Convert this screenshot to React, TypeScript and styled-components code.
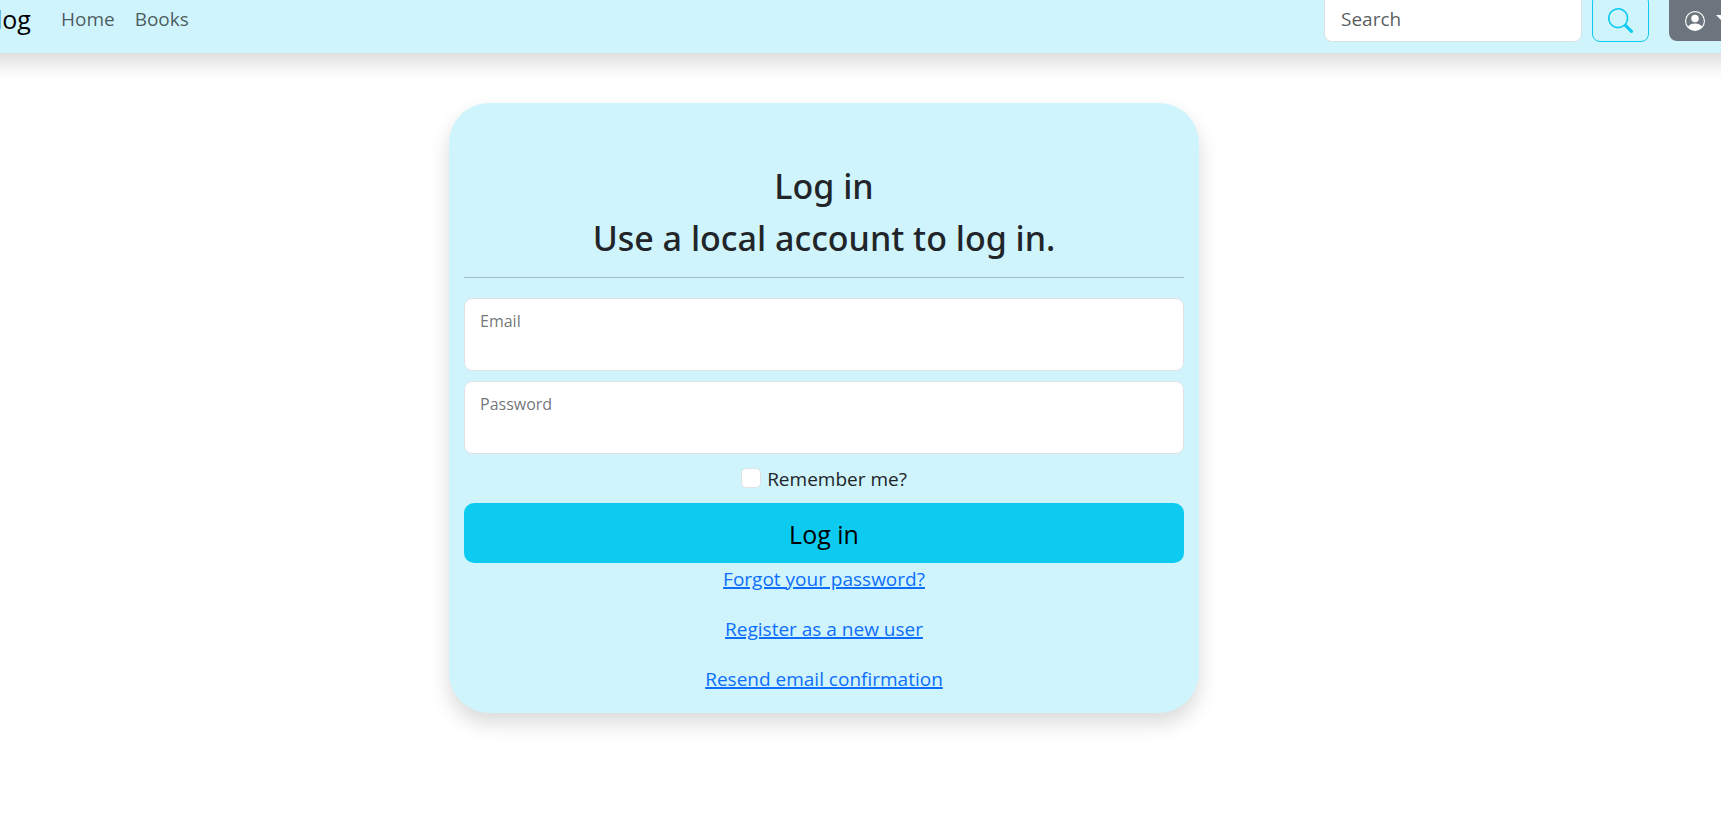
import React from "react";
import styled, { createGlobalStyle } from "styled-components";
import { BsPersonCircle, BsSearch } from "react-icons/bs";

const GlobalStyle = createGlobalStyle`
  *, *::before, *::after { box-sizing: border-box; }
  body {
    margin: 0;
    background: #fff;
    color: #212529;
    font: 400 19px/30px "Segoe UI", "Open Sans", "Noto Sans", sans-serif;
  }
  button, input { font: inherit; }
`;

const Page = styled.div`
  overflow: hidden;
`;

const Header = styled.header`
  margin: 0 -24px;
  padding-bottom: 11px;
  background: #cff4fc;
  box-shadow: 0 10px 20px rgba(0, 0, 0, 0.15);
`;

const Bar = styled.nav`
  display: flex;
  align-items: center;
  margin-top: -6px;
  padding-left: 20px;
`;

const Brand = styled.a`
  margin-right: 30px;
  padding-top: 2px;
  color: #000;
  font-size: 25px;
  line-height: 36px;
  text-decoration: none;
`;

const NavLinks = styled.div`
  display: flex;
  flex: 1;
  gap: 20px;
  padding-top: 2px;
`;

const NavLink = styled.a`
  color: rgba(0, 0, 0, 0.65);
  text-decoration: none;
`;

const SearchForm = styled.form`
  display: flex;
  gap: 10px;
  margin-right: 20px;
`;

const SearchInput = styled.input`
  width: 258px;
  height: 48px;
  padding: 2px 16px 0;
  border: 1px solid #dee2e6;
  border-radius: 8px;
  background: #fff;
  color: #212529;
  &::placeholder {
    color: rgba(33, 37, 41, 0.75);
    opacity: 1;
  }
`;

const SearchButton = styled.button`
  display: flex;
  align-items: center;
  justify-content: center;
  width: 57px;
  height: 48px;
  padding: 4px 0 0;
  border: 1px solid #0dcaf0;
  border-radius: 8px;
  background: transparent;
  color: #0dcaf0;
`;

const UserButton = styled.button`
  display: flex;
  align-items: center;
  align-self: flex-start;
  gap: 11px;
  width: 76px;
  height: 47px;
  padding: 7px 16px 0;
  border: 0;
  border-radius: 8px;
  background: #6c757d;
  color: #fff;
`;

const Caret = styled.span`
  flex: none;
  margin-bottom: 6px;
  border: 6px solid transparent;
  border-top-color: currentColor;
  border-bottom: 0;
`;

const Main = styled.main`
  display: flex;
  justify-content: center;
  padding: 50px 73px 50px 0;
`;

const Card = styled.section`
  width: 750px;
  max-width: 100%;
  padding: 62px 15px 19px;
  border-radius: 40px;
  background: #cff4fc;
  box-shadow: 0 10px 20px rgba(0, 0, 0, 0.15);
  text-align: center;
`;

const Title = styled.h1`
  margin: 0 0 10px;
  font-family: "Segoe UI", "Noto Sans", sans-serif;
  font-size: 34px;
  font-weight: 500;
  line-height: 42px;
`;

const Divider = styled.hr`
  margin: 18px 0 20px;
  border: 0;
  border-top: 1px solid #212529;
  opacity: 0.25;
`;

const Form = styled.form`
  display: flex;
  flex-direction: column;
`;

const Field = styled.div`
  position: relative;
  margin-bottom: 10px;
`;

const FieldInput = styled.input`
  display: block;
  width: 100%;
  height: 73px;
  padding: 32px 15px 12px;
  border: 1px solid #dee2e6;
  border-radius: 8px;
  background: #fff;
  color: #212529;
`;

const FieldLabel = styled.label`
  position: absolute;
  top: 10px;
  left: 16px;
  color: rgba(33, 37, 41, 0.65);
  font-size: 16px;
  line-height: 26px;
`;

const Remember = styled.label`
  display: flex;
  align-items: center;
  align-self: center;
  gap: 6px;
  margin-bottom: 9px;
`;

const Checkbox = styled.input`
  appearance: none;
  width: 20px;
  height: 20px;
  margin: 0 0 2px;
  border: 1px solid #dee2e6;
  border-radius: 5px;
  background: #fff;
  &:checked { background: #0d6efd; }
`;

const Submit = styled.button`
  height: 60px;
  padding: 2px 0 0;
  border: 0;
  border-radius: 10px;
  background: #0dcaf0;
  color: #000;
  font-size: 25px;
`;

const Links = styled.div`
  display: flex;
  flex-direction: column;
  align-items: center;
  gap: 20px;
  padding-top: 1px;
`;

const TextLink = styled.a`
  color: #0d6efd;
  text-decoration: underline 2px;
`;

export default function App() {
  return (
    <Page>
      <GlobalStyle />
      <Header>
        <Bar>
          <Brand href="#">log</Brand>
          <NavLinks>
            <NavLink href="#">Home</NavLink>
            <NavLink href="#">Books</NavLink>
          </NavLinks>
          <SearchForm>
            <SearchInput type="search" placeholder="Search" aria-label="Search" />
            <SearchButton type="button" aria-label="Submit search">
              <BsSearch size={25} />
            </SearchButton>
          </SearchForm>
          <UserButton type="button" aria-label="Account menu">
            <BsPersonCircle size={20} />
            <Caret />
          </UserButton>
        </Bar>
      </Header>
      <Main>
        <Card>
          <Title>Log in</Title>
          <Title as="h2">Use a local account to log in.</Title>
          <Divider />
          <Form>
            <Field>
              <FieldInput id="email" type="email" />
              <FieldLabel htmlFor="email">Email</FieldLabel>
            </Field>
            <Field>
              <FieldInput id="password" type="password" />
              <FieldLabel htmlFor="password">Password</FieldLabel>
            </Field>
            <Remember>
              <Checkbox type="checkbox" />
              Remember me?
            </Remember>
            <Submit type="button">Log in</Submit>
          </Form>
          <Links>
            <TextLink href="#">Forgot your password?</TextLink>
            <TextLink href="#">Register as a new user</TextLink>
            <TextLink href="#">Resend email confirmation</TextLink>
          </Links>
        </Card>
      </Main>
    </Page>
  );
}
